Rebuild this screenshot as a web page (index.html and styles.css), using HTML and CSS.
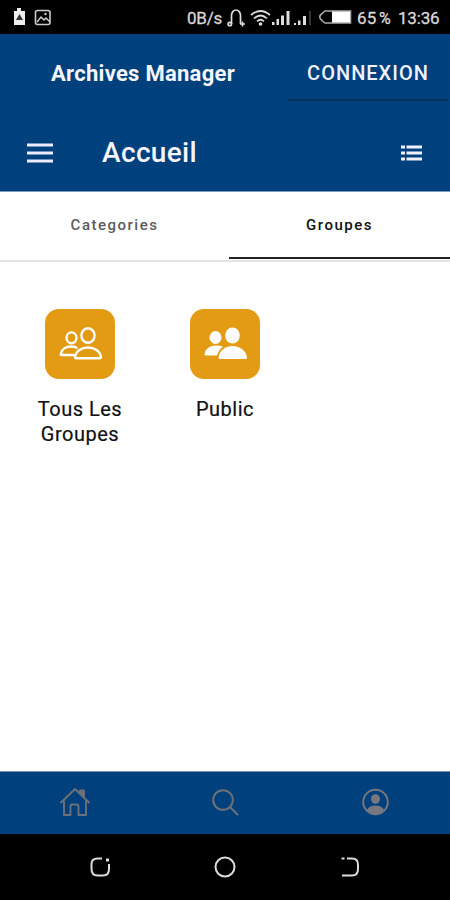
FILE: index.html
```html
<!DOCTYPE html>
<html lang="fr">
<head>
    <meta charset="UTF-8">
    <meta name="viewport" content="width=device-width, initial-scale=1.0">
    <title>Archives Manager</title>
    <link rel="stylesheet" href="styles.css">
</head>
<body>
    <div class="status-bar">
        <svg class="status-left" width="40" height="18" viewBox="0 0 40 18">
            <path d="M4 0h4v3h4v14H1V3h3z" fill="#eee"/>
            <path d="M6.500 6L10 12H3z" fill="#333"/>
            <rect x="22.500" y="2.500" width="14.500" height="14" rx="2" fill="none" stroke="#ccc" stroke-width="1.600"/>
            <path d="M24 14l4-5 3 3 2-2 4 4" fill="none" stroke="#ccc" stroke-width="1.500"/>
            <circle cx="32.500" cy="6" r="1.200" fill="#ccc"/>
        </svg>
        <span class="net-speed">0B/s</span>
        <svg class="status-icons" width="128" height="22" viewBox="0 0 128 22">
            <g fill="none" stroke="#ddd" stroke-width="1.700">
                <path d="M6.500 18V9.500a4.500 5.500 0 0 1 9 0V18"/>
                <path d="M15 18h5M17.500 15.500v5"/>
                <circle cx="4.800" cy="18" r="1.700"/>
                <path d="M26 9q9.500-8 19 0M29 12.500q6.500-6 13 0M32 15.500q3.500-3.500 7 0"/>
            </g>
            <circle cx="35.500" cy="18" r="1.800" fill="#ddd"/>
            <path d="M47 16h2.500v3H47zM51.500 13H54v6h-2.500zM56 9.500h3V19h-3zM61.500 5h3v14h-3z" fill="#ddd"/>
            <path d="M69 17h2v2h-2zM73 14.500h2.500V19H73zM78 10h3v9h-3z" fill="#ddd"/>
            <path d="M84 5h2v14h-2z" fill="#333"/>
            <path d="M100 5h25.500v12H100l-3-2.500q-4.500-3.500 0-7z" fill="none" stroke="#aaa" stroke-width="1.600"/>
            <rect x="107" y="5.500" width="18" height="11" fill="#fff"/>
        </svg>
        <span class="battery">65</span>
        <span class="percent">%</span>
        <span class="clock">13:36</span>
    </div>

    <header class="header">
        <div class="header-top">
            <h1 class="app-name">Archives Manager</h1>
            <button class="login">CONNEXION</button>
        </div>
        <div class="toolbar">
            <svg class="menu-icon" width="26" height="20" viewBox="0 0 26 20">
                <path d="M0 2h26M0 10h26M0 18h26" stroke="#eeeaff" stroke-width="3"/>
            </svg>
            <h2 class="page-title">Accueil</h2>
            <svg class="list-icon" width="22" height="16" viewBox="0 0 22 16">
                <path d="M0 2h4M0 8h4M0 14h4M5.500 2H21M5.500 8H21M5.500 14H21" stroke="#f0f0ff" stroke-width="3"/>
            </svg>
        </div>
    </header>

    <nav class="tabs">
        <button class="tab">Categories</button>
        <button class="tab active">Groupes</button>
    </nav>

    <main class="groups">
        <div class="group">
            <div class="group-icon">
                <svg width="70" height="70" viewBox="0 0 70 70" fill="none" stroke="#fff" stroke-width="2.400" stroke-linejoin="round" stroke-linecap="round">
                    <ellipse cx="43" cy="26.500" rx="6.600" ry="7.200"/>
                    <path d="M30 48.500C30.500 42 37 38.500 43 38.500s12.500 3.500 13 10q0 .7-1.500.7H31.500q-1.500 0-1.500-.7z"/>
                    <ellipse cx="26.500" cy="28.800" rx="5" ry="5.400"/>
                    <path d="M28.500 46H16.500q-1 0-.8-1C16.500 40 21 37.500 26 37.500q3 0 5.500 1.200"/>
                </svg>
            </div>
            <p class="group-name">Tous Les Groupes</p>
        </div>
        <div class="group">
            <div class="group-icon">
                <svg width="70" height="70" viewBox="0 0 70 70" fill="#fff">
                    <ellipse cx="42.500" cy="26.500" rx="7.300" ry="8"/>
                    <path d="M28.500 49C29 41 36 37 42.500 37S56.500 41 57 49q0 1-1.500 1H30q-1.500 0-1.500-1z"/>
                    <ellipse cx="25.500" cy="28.500" rx="6" ry="6.500"/>
                    <path d="M33 37.500Q29 40.500 27 46.500H16q-1.500 0-1.500-1C15 39.500 20.500 36.500 26 36.500q4 0 7 1z"/>
                </svg>
            </div>
            <p class="group-name">Public</p>
        </div>
    </main>

    <footer class="bottom-nav">
        <a class="nav-item">
            <svg width="32" height="32" viewBox="0 0 32 32" fill="none" stroke="#6c7078" stroke-width="1.900" stroke-linejoin="round" stroke-linecap="round">
                <path d="M2 16.500L16 3l14 13.500M5 14.500v14.500h6.500v-9q0-1.500 1.500-1.500h5q1.500 0 1.500 1.500v9H27V14.500"/>
                <path d="M21 6.500V4.500h4V11z" fill="#6c7078"/>
            </svg>
        </a>
        <a class="nav-item">
            <svg width="32" height="32" viewBox="0 0 32 32" fill="none" stroke="#6c7078" stroke-width="2" stroke-linecap="round">
                <circle cx="14" cy="14" r="9.800"/>
                <path d="M21.200 21.200L28.500 28.500"/>
            </svg>
        </a>
        <a class="nav-item">
            <svg width="32" height="32" viewBox="0 0 32 32" fill="none" stroke="#777880" stroke-width="1.900">
                <circle cx="16.500" cy="16" r="12.300"/>
                <ellipse cx="16.500" cy="13" rx="4.500" ry="4.800" fill="#777880" stroke="none"/>
                <path d="M8 24Q10 19.500 16.500 19.500t8.500 4.500Q21.500 28 16.500 28T8 24z" fill="#777880" stroke="none"/>
            </svg>
        </a>
    </footer>

    <div class="system-nav">
        <svg width="24" height="24" viewBox="0 0 24 24" fill="none" stroke="#ddd" stroke-width="2">
            <path d="M14 3.500H9.500Q3.500 3.500 3.500 9v5q0 6.500 6 6.500h5.500Q21 20.500 21 14V9"/>
            <path d="M18 5h3" stroke-width="3"/>
        </svg>
        <svg width="24" height="24" viewBox="0 0 24 24" fill="none" stroke="#ddd" stroke-width="2">
            <circle cx="12" cy="12" r="9.500"/>
        </svg>
        <svg width="24" height="24" viewBox="0 0 24 24" fill="none" stroke="#ddd" stroke-width="2">
            <path d="M3.500 3.500h3M9 3.500h5q6 0 6 6V14q0 6.500-6 6.500H4"/>
        </svg>
    </div>
</body>
</html>
```
FILE: styles.css
```css
* {
    box-sizing: border-box;
}

body {
    margin: 0;
    width: 450px;
    height: 900px;
    display: flex;
    flex-direction: column;
    overflow: hidden;
    background-color: #fff;
    font-family: Roboto, 'Liberation Sans', sans-serif;
}

button {
    border: none;
    background: none;
    font-family: inherit;
    padding: 0;
}

svg {
    display: block;
    flex-shrink: 0;
}

.status-bar {
    height: 34px;
    background-color: #000;
    color: #d8d8d8;
    display: flex;
    align-items: center;
    padding-left: 13px;
    font-size: 17px;
    white-space: nowrap;
}

.net-speed {
    width: 38px;
    margin-left: 134px;
    padding-top: 2px;
    letter-spacing: -0.2px;
    -webkit-text-stroke: 0.3px;
}

.battery {
    width: 22px;
    margin-left: 4px;
    letter-spacing: 0.3px;
    padding-top: 2px;
    -webkit-text-stroke: 0.3px;
}

.percent {
    width: 19px;
    font-size: 16px;
    padding-top: 2px;
    -webkit-text-stroke: 0.3px;
}

.clock {
    padding-top: 2px;
    letter-spacing: -0.2px;
    -webkit-text-stroke: 0.3px;
}

.header {
    height: 158px;
    background-color: #00407c;
    border-bottom: 1px solid #7d9bc0;
    color: #fff;
}

.header-top {
    display: flex;
    height: 68px;
    padding-left: 51px;
    justify-content: space-between;
}

.app-name {
    margin: 0;
    font-size: 22px;
    line-height: 80px;
    font-weight: 700;
    letter-spacing: 0.28px;
    color: #f5f5ff;
}

.login {
    width: 160px;
    height: 67px;
    margin-right: 2px;
    border-bottom: 2px solid #063059;
    padding-top: 12px;
    color: #f0f0ff;
    font-size: 20px;
    font-weight: 500;
    letter-spacing: 1px;
}

.toolbar {
    display: flex;
    align-items: center;
    height: 89px;
    padding: 12px 27px 0 27px;
}

.page-title {
    margin: 0 auto 0 49px;
    font-size: 28px;
    font-weight: 500;
    line-height: 34px;
    letter-spacing: 0.35px;
    color: #f5f5ff;
}

.tabs {
    display: flex;
    height: 70px;
    border-bottom: 2px solid #e4e4e4;
}

.tab {
    width: 229px;
    height: 68px;
    padding-bottom: 2px;
    color: #5b5b5b;
    font-size: 15px;
    font-weight: 500;
    letter-spacing: 1.5px;
}

.tab.active {
    width: 221px;
    height: 67px;
    padding-bottom: 0;
    color: #111;
    border-bottom: 2px solid #222;
}

.groups {
    flex: 1;
    display: flex;
    gap: 45px;
    padding: 47px 0 0 30px;
}

.group {
    width: 100px;
    display: flex;
    flex-direction: column;
    align-items: center;
}

.group-icon {
    width: 70px;
    height: 70px;
    margin-right: 1px;
    border-radius: 14px;
    background-color: #e29b12;
}

.group-name {
    margin: 18px 0 0;
    text-align: center;
    color: #111;
    font-size: 20px;
    line-height: 25px;
    letter-spacing: 0.5px;
    -webkit-text-stroke: 0.2px;
}

.bottom-nav {
    height: 63px;
    background-color: #00407c;
    border-top: 1px solid #7d8fb0;
    padding-bottom: 2px;
    display: flex;
}

.nav-item {
    flex: 1;
    display: flex;
    align-items: center;
    justify-content: center;
}

.system-nav {
    height: 66px;
    background-color: #000;
    display: flex;
    align-items: center;
    justify-content: space-between;
    padding: 0 88px;
}
```
